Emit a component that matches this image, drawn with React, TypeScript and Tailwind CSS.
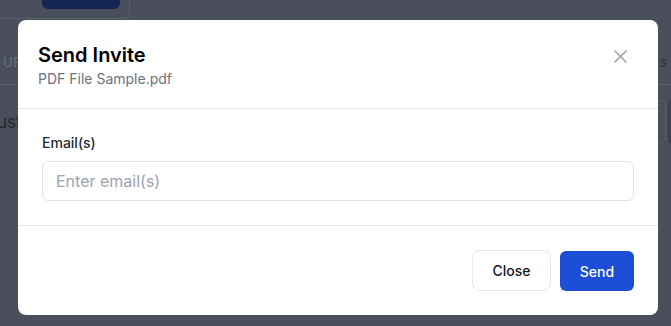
import React from "react";

export default function App() {
  return (
    <div
      className="relative w-[671px] h-[326px] overflow-hidden bg-[#4b4f5c]"
      style={{ fontFamily: "Inter, 'Noto Sans', sans-serif" }}
    >
      {/* dimmed page behind */}
      <div className="absolute inset-0">
        <div className="absolute left-0 top-0 w-[130px] h-[19px] border-b border-r border-[#5b5f6b] rounded-br-md">
          <div className="absolute left-[42px] top-[-10px] w-[78px] h-[19px] rounded-md bg-[#142556]" />
        </div>
        <div className="absolute left-[3px] top-[53px] text-[13px] tracking-wide text-[#6b6f7b]">UP</div>
        <div className="absolute left-[660px] top-[53px] text-[13px] text-[#2d313c]">s</div>
        <div className="absolute left-0 right-0 top-[84px] h-px bg-[#5b5f6b]" />
        <div className="absolute left-[-3px] top-[110px] text-[17px] text-[#23262f]">ust</div>
        <div className="absolute left-[640px] top-[100px] w-[26px] h-[43px] rounded-md border border-[#5b5f6b]" />
        <div className="absolute left-[668px] top-[100px] w-[6px] h-[43px] rounded-md bg-[#3b3f4e]" />
      </div>

      {/* modal */}
      <div className="absolute left-[18px] top-[20px] w-[640px] h-[295px] rounded-lg bg-white flex flex-col">
        <div className="flex items-start justify-between px-5 pt-[21px] pb-[19px] border-b border-[#e5e7eb]">
          <div className="flex flex-col">
            <h2 className="text-[20px] leading-[28px] font-semibold text-black">Send Invite</h2>
            <p className="text-[14px] leading-[20px] text-[#6b7280]">PDF File Sample.pdf</p>
          </div>
          <button className="mt-[9px] mr-[11px] text-[#9ca3af]">
            <svg width="13" height="13" viewBox="0 0 13 13" fill="none" stroke="currentColor" strokeWidth="1.6" strokeLinecap="round">
              <path d="M1 1L12 12M12 1L1 12" />
            </svg>
          </button>
        </div>
        <div className="px-6 pt-[24px] pb-[24px] border-b border-[#e5e7eb] flex flex-col">
          <label className="text-[14px] leading-[20px] font-medium text-[#1f2937]">Email(s)</label>
          <div className="mt-[8px] h-[40px] rounded-md border border-[#e0e2e6] flex items-center px-[13px]">
            <span className="text-[16px] text-[#9ca3af]">Enter email(s)</span>
          </div>
        </div>
        <div className="flex justify-end gap-[9px] px-6 pt-[24px]">
          <button className="w-[79px] h-[41px] rounded-lg border border-[#e5e7eb] bg-white text-[14px] font-medium text-[#111827]">
            Close
          </button>
          <button className="w-[74px] h-[40px] mt-[1px] rounded-md bg-[#1d4ed8] text-[14px] font-medium text-white">
            Send
          </button>
        </div>
      </div>
    </div>
  );
}
